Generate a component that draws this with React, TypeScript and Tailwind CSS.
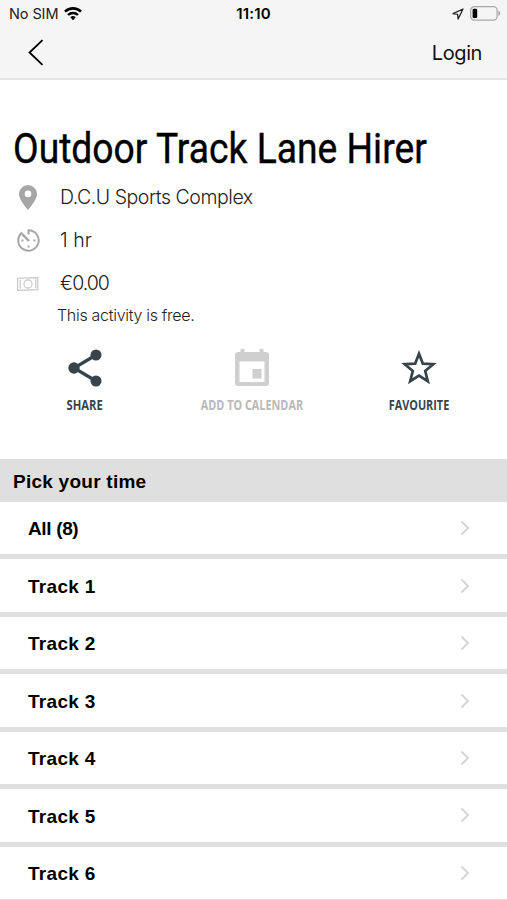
import type { ReactNode } from "react";

const slots = ["All (8)", "Track 1", "Track 2", "Track 3", "Track 4", "Track 5", "Track 6"];

function StatusBar() {
  return (
    <div className="flex h-[27px] items-center justify-between pl-[9px] pr-[6px] font-['Inter',sans-serif] text-black">
      <div className="flex w-[120px] items-center gap-[6px]">
        <span className="relative top-px text-[14.5px] leading-none tracking-[-0.1px] text-[#222]">No SIM</span>
        <svg width="18" height="14" viewBox="0 0 18 14" fill="none" stroke="#000">
          <path d="M1 4.600a11.600 11.600 0 0 1 16 0" strokeWidth="2.600" />
          <path d="M4 8a7.300 7.300 0 0 1 10 0" strokeWidth="2.400" />
          <path d="M9 13.200l-2.700-2.900a4 4 0 0 1 5.400 0z" fill="#000" stroke="none" />
        </svg>
      </div>
      <span className="mr-[3px] text-[15px] font-semibold leading-none tracking-[0.2px]">11:10</span>
      <div className="flex w-[120px] items-center justify-end gap-[6px]">
        <svg width="12" height="12" viewBox="0 0 12 12" fill="none" stroke="#222" strokeWidth="1.300" strokeLinejoin="round">
          <path d="M11 1L1 5.700l4.600.7.500 4.600z" />
        </svg>
        <svg width="31" height="15" viewBox="0 0 31 15">
          <rect x=".7" y=".7" width="26.400" height="13.400" rx="3.600" fill="none" stroke="#a8a8a8" strokeWidth="1.200" />
          <rect x="2.600" y="2.800" width="4.600" height="9.200" rx="1.200" fill="#000" />
          <path d="M28.300 4.800c2.600 1 2.600 4.200 0 5.200z" fill="#a8a8a8" />
        </svg>
      </div>
    </div>
  );
}

function Detail({ icon, spacing, children }: { icon: ReactNode; spacing: string; children: ReactNode }) {
  return (
    <div className="flex h-[43px] items-center">
      <div className="flex w-[28px] justify-center">{icon}</div>
      <span className={`ml-[18px] text-[19.5px] leading-none ${spacing}`}>{children}</span>
    </div>
  );
}

function Action({ label, scale, className, children }: { label: string; scale: string; className: string; children: ReactNode }) {
  return (
    <div className={`flex w-[167px] flex-col items-center ${className}`}>
      <div className="flex h-[42px] items-center">{children}</div>
      <span className={`mt-[9px] whitespace-nowrap font-['Open_Sans',sans-serif] text-[14px] font-bold leading-[14px] ${scale}`}>
        {label}
      </span>
    </div>
  );
}

export default function App() {
  return (
    <div className="h-[900px] w-full overflow-hidden bg-white font-['Liberation_Sans',Arial,sans-serif] text-black">
      <header className="h-[80px] border-b-2 border-[#e6e6e6] bg-[#f5f5f5]">
        <StatusBar />
        <div className="flex h-[51px] items-center justify-between pl-[28px] pr-[25px]">
          <svg width="16" height="27" viewBox="0 0 16 27" fill="none" stroke="#000" strokeWidth="1.800">
            <path d="M14.500 1.200L1.500 13.500l13 12.300" />
          </svg>
          <span className="font-['Inter',sans-serif] text-[20px] leading-none tracking-[-0.4px] text-[#111]">Login</span>
        </div>
      </header>

      <section className="h-[379px] pt-[44px]">
        <h1 className="ml-[13px] h-[50px] w-max origin-left scale-x-[0.887] whitespace-nowrap font-['Roboto',sans-serif] text-[42px] font-normal leading-[50px] [-webkit-text-stroke:0.4px_#000]">
          Outdoor Track Lane Hirer
        </h1>
        <div className="ml-[14px] mt-[2px] font-['Inter',sans-serif] font-light text-[#222]">
          <Detail
            spacing="tracking-[-0.45px]"
            icon={
              <svg width="18" height="25" viewBox="0 0 18 25" fill="#a6a6a6">
                <path fillRule="evenodd" d="M9 0a9 9 0 0 0-9 9c0 6.200 9 16 9 16s9-9.800 9-16a9 9 0 0 0-9-9zm0 5.600a3.300 3.300 0 1 1 0 6.600 3.300 3.300 0 0 1 0-6.600z" />
              </svg>
            }
          >
            D.C.U Sports Complex
          </Detail>
          <Detail
            spacing="tracking-normal"
            icon={
              <svg width="23" height="23" viewBox="0 0 23 23" fill="none" stroke="#a6a6a6" strokeWidth="2">
                <path d="M5.300 3.400A10.200 10.200 0 1 0 11.500 1.300V5.500" />
                <path d="M5.200 5.200L12 12" strokeWidth="2.400" />
                <path d="M4.500 11.500h2M16.500 11.500h2M10.500 17.500h2" />
              </svg>
            }
          >
            1 hr
          </Detail>
          <Detail
            spacing="tracking-[-1px]"
            icon={
              <svg width="22" height="14" viewBox="0 0 22 14" fill="none" stroke="#c4c4c4" strokeWidth="1.100">
                <path d="M.6 1.200L20.800.600v12L.6 13.400zM4 3.400h-.8v7.600H4M18 3h.8v7.600H18" />
                <circle cx="11" cy="7" r="4.100" />
              </svg>
            }
          >
            €0.00
          </Detail>
          <p className="ml-[43px] text-[16px] leading-[20px] tracking-[-0.3px]">This activity is free.</p>
        </div>

        <div className="-ml-[3px] mt-[22px] flex justify-center">
          <Action label="SHARE" scale="scale-x-[0.8]" className="text-[#37444b]">
            <svg width="34" height="38" viewBox="0 0 34 38" fill="#37444b">
              <path d="M28 6L6 19l22 13" fill="none" stroke="#37444b" strokeWidth="3.200" />
              <circle cx="28" cy="6" r="5.500" />
              <circle cx="6" cy="19" r="5.700" />
              <circle cx="28" cy="32" r="5.500" />
            </svg>
          </Action>
          <Action label="ADD TO CALENDAR" scale="scale-x-[0.775]" className="text-[#b9b9b9]">
            <svg width="34" height="38" viewBox="0 0 34 38" fill="#cfcfcf">
              <path fillRule="evenodd" d="M5.500 0h4v3h15V0h4v3H31a3 3 0 0 1 3 3v28a3 3 0 0 1-3 3H3a3 3 0 0 1-3-3V6a3 3 0 0 1 3-3h2.500zM4.500 12.500V33h25V12.500z" />
              <path d="M17.500 20h9v9.500h-9z" />
            </svg>
          </Action>
          <Action label="FAVOURITE" scale="scale-x-[0.775]" className="text-[#37444b]">
            <svg width="36" height="36" viewBox="0 0 36 36" fill="none" stroke="#37444b" strokeWidth="2.700">
              <path d="M18 3.800L21.800 13.600 32.300 14.200 24.200 20.900 26.800 31.200 18 25.500 9.200 31.200 11.800 20.900 3.700 14.200 14.200 13.600z" />
            </svg>
          </Action>
        </div>
      </section>

      <h2 className="h-[43px] bg-[#dfdfdf] pl-[13px] text-[19px] font-bold leading-[45px] tracking-[0.25px]">Pick your time</h2>
      <ul>
        {slots.map((slot) => (
          <li key={slot} className="flex h-[57.450px] items-center justify-between border-b-[5px] border-[#e0e0e0] pl-[28px] pr-[37px] text-[19px] font-bold">
            <span className={`relative top-[1.5px] ${slot.startsWith("All") ? "tracking-[-0.35px]" : "tracking-[0.3px]"}`}>{slot}</span>
            <svg width="10" height="16" viewBox="0 0 10 16" fill="none" stroke="#d6d6d6" strokeWidth="2">
              <path d="M1.500 1.500L8 8l-6.500 6.500" />
            </svg>
          </li>
        ))}
      </ul>
    </div>
  );
}
